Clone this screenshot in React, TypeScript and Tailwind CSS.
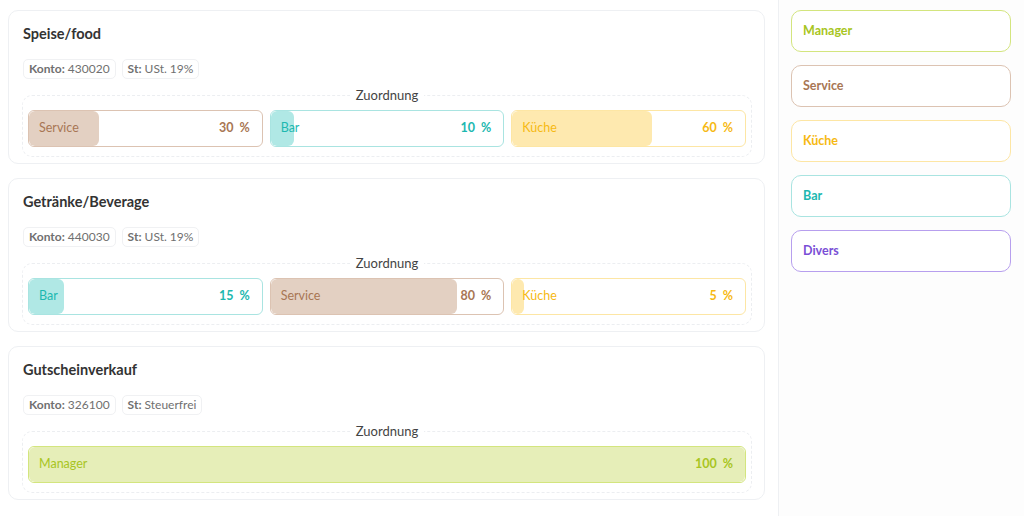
const tones = {
  service: { border: "border-[#dcc3b2]", fill: "bg-[#e3d0c2]", text: "text-[#a87654]" },
  bar: { border: "border-[#a9e4e1]", fill: "bg-[#b0e8e5]", text: "text-[#1db8b0]" },
  kueche: { border: "border-[#fde6a4]", fill: "bg-[#fee9af]", text: "text-[#f6b913]" },
  manager: { border: "border-[#d3e57e]", fill: "bg-[#e6eeb8]", text: "text-[#a8c522]" },
  divers: { border: "border-[#b79fee]", fill: "bg-[#ece4fb]", text: "text-[#7a4fd6]" },
}

type Tone = keyof typeof tones

const accounts: { title: string; konto: string; st: string; parts: { name: string; tone: Tone; pct: number }[] }[] = [
  {
    title: "Speise/food",
    konto: "430020",
    st: "USt. 19%",
    parts: [
      { name: "Service", tone: "service", pct: 30 },
      { name: "Bar", tone: "bar", pct: 10 },
      { name: "Küche", tone: "kueche", pct: 60 },
    ],
  },
  {
    title: "Getränke/Beverage",
    konto: "440030",
    st: "USt. 19%",
    parts: [
      { name: "Bar", tone: "bar", pct: 15 },
      { name: "Service", tone: "service", pct: 80 },
      { name: "Küche", tone: "kueche", pct: 5 },
    ],
  },
  {
    title: "Gutscheinverkauf",
    konto: "326100",
    st: "Steuerfrei",
    parts: [{ name: "Manager", tone: "manager", pct: 100 }],
  },
]

const groups: { name: string; tone: Tone }[] = [
  { name: "Manager", tone: "manager" },
  { name: "Service", tone: "service" },
  { name: "Küche", tone: "kueche" },
  { name: "Bar", tone: "bar" },
  { name: "Divers", tone: "divers" },
]

function Share({ name, tone, pct }: { name: string; tone: Tone; pct: number }) {
  const t = tones[tone]
  return (
    <div className={`relative flex-1 h-[37px] rounded-md border bg-white overflow-hidden ${t.border}`}>
      <div className={`absolute left-0 top-0 bottom-0 rounded-md ${t.fill}`} style={{ width: `${pct}%` }} />
      <div className={`relative flex h-full items-center justify-between pl-[10px] pr-[12px] text-[12.5px] ${t.text}`}>
        <span>{name}</span>
        <span className="font-bold">
          {pct}
          <span className="ml-[6px]">%</span>
        </span>
      </div>
    </div>
  )
}

export default function App() {
  return (
    <div className="flex w-[1024px] h-[516px] bg-white text-[#3b3b3b] font-['Lato','Noto_Sans',sans-serif] overflow-hidden">
      <main className="w-[778px] pl-2 pr-[13px] pt-[10px] flex flex-col gap-[14px]">
        {accounts.map((a) => (
          <section key={a.title} className="rounded-[10px] border border-[#eef0f3] bg-white pl-[13px] pr-[12px] pt-[14px] pb-[6px]">
            <h2 className="ml-[1px] text-[14.5px] font-bold leading-[18px] text-[#333]">{a.title}</h2>
            <div className="ml-[1px] mt-[16px] flex gap-[6px] text-[12px] text-[#707070]">
              <span className="h-[20px] leading-[18px] rounded-[5px] border border-[#f0f1f3] px-[5px]">
                <b className="font-bold">Konto:</b> {a.konto}
              </span>
              <span className="h-[20px] leading-[18px] rounded-[5px] border border-[#f0f1f3] px-[5px]">
                <b className="font-bold">St:</b> {a.st}
              </span>
            </div>
            <fieldset className="mt-[8px] rounded-[10px] border border-dashed border-[#eceef1] pl-[5px] pr-[5px] pt-[6px] pb-[9px]">
              <legend className="mx-auto px-[6px] text-[13px] leading-[17px] text-[#444]">Zuordnung</legend>
              <div className="flex gap-[7px]">
                {a.parts.map((p) => (
                  <Share key={p.name} {...p} />
                ))}
              </div>
            </fieldset>
          </section>
        ))}
      </main>
      <aside className="flex-1 border-l border-[#eef0f3] bg-[#fdfdfd] pl-[12px] pr-[13px] pt-[10px] flex flex-col gap-[13px]">
        {groups.map((g) => {
          const t = tones[g.tone]
          return (
            <div key={g.name} className={`h-[42px] rounded-[10px] border bg-white flex items-center pl-[11px] text-[12.5px] font-bold ${t.border} ${t.text}`}>
              {g.name}
            </div>
          )
        })}
      </aside>
    </div>
  )
}
